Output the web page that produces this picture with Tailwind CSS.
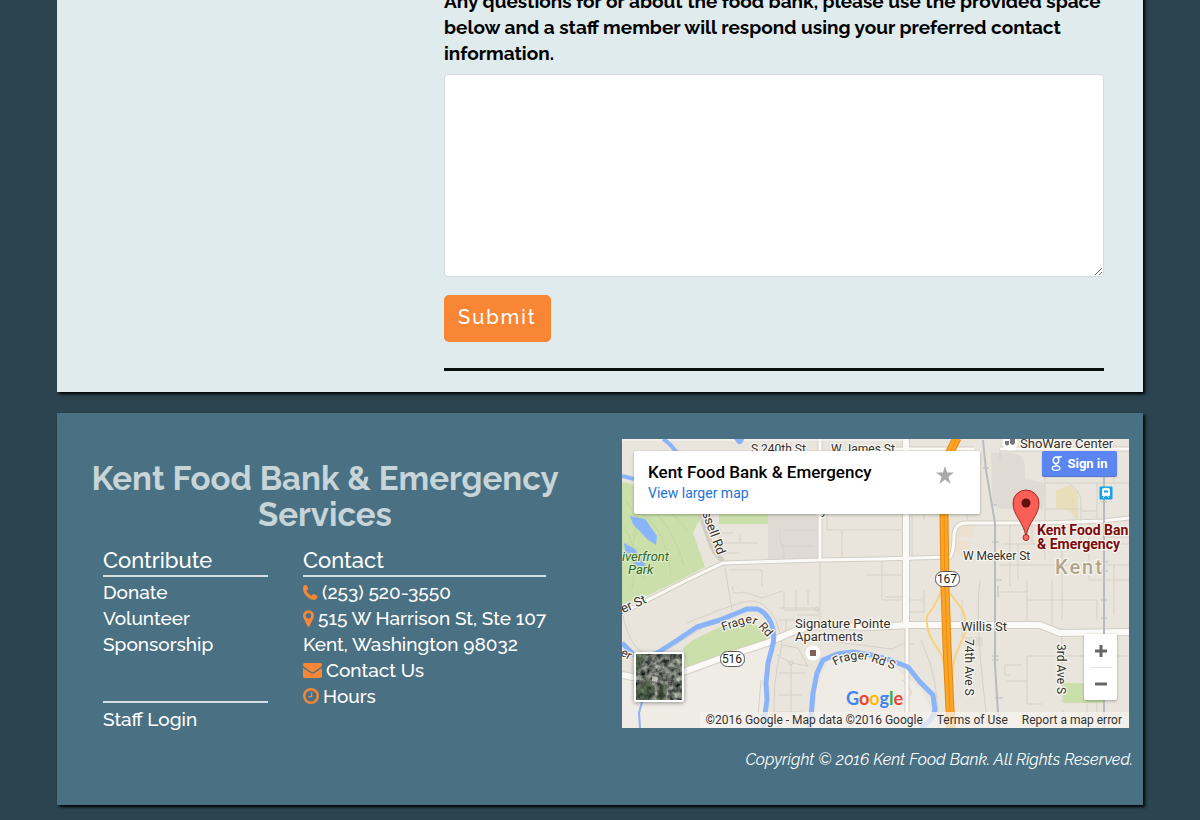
<!DOCTYPE html>
<html lang="en">
<head>
<meta charset="utf-8">
<meta name="viewport" content="width=device-width, initial-scale=1">
<title>Kent Food Bank &amp; Emergency Services</title>
<script src="https://cdn.jsdelivr.net/npm/@tailwindcss/browser@4"></script>
</head>
<body class="min-h-screen overflow-x-hidden bg-[#2c4450] px-[57px] font-[Raleway,Lato,sans-serif] text-black">

<main class="bg-[#dfebed] pr-[39px] pb-[21px] pl-[387px] shadow-[2px_2px_3px_#000]">
  <form>
    <label for="questions" class="-mt-3 block pb-2 text-[19px] leading-[26px] font-bold">Any questions for or about the food bank, please use the provided space below and a staff member will respond using your preferred contact information.</label>
    <textarea id="questions" class="block h-[203px] w-full resize rounded border border-[#d5dcde] bg-white p-3 text-[19px]"></textarea>
    <button type="submit" class="mt-[18px] block h-[47px] rounded-[5px] bg-[#f88635] px-[14px] pb-[3px] text-[20px] font-medium tracking-[2px] text-white">Submit</button>
  </form>
  <hr class="mt-[26px] border-t-[3px] border-[#0c1011]">
</main>

<footer class="mt-[21px] flex bg-[#4a7183] pt-[26px] text-[19px] leading-[26px] font-medium text-white shadow-[2px_2px_3px_#000]">
  <div class="w-1/2 pt-[22px] pr-[22px] pb-[73px] pl-[15px]">
    <h2 class="text-center text-[33px] leading-9 font-bold text-[#c7d4d8]">Kent Food Bank &amp; Emergency Services</h2>
    <div class="mt-[13px] flex gap-[35px] pl-[31px]">
      <nav class="w-[165px]">
        <h3 class="mb-[2px] border-b-2 border-[#d3dfe2] pb-[1px] text-[22px] leading-7">Contribute</h3>
        <a href="#donate" class="block">Donate</a>
        <a href="#volunteer" class="block">Volunteer</a>
        <a href="#sponsorship" class="block">Sponsorship</a>
        <a href="#staff" class="mt-[44px] block border-t-2 border-[#d3dfe2] pt-[3px]">Staff Login</a>
      </nav>
      <div class="w-[243px] whitespace-nowrap">
        <h3 class="mb-[2px] border-b-2 border-[#d3dfe2] pb-[1px] text-[22px] leading-7">Contact</h3>
        <a href="tel:+12535203550" class="flex items-center gap-1">
          <svg class="h-[15px] w-[15px] shrink-0" viewBox="0 0 15 15" fill="#f88635"><path d="M.7.9C1.600 0 2.800-.2 3.600.2l1.500 3.100c.2.500 0 1-.4 1.300l-.9.7c-.3.300-.3.600-.1 1 .8 1.600 2.300 3.200 4.100 4.200.4.200.8.200 1-.1l.9-1c.3-.4.800-.5 1.200-.3l3 1.600c.5.300.7.700.5 1.300-.5 1.900-2.100 3-4 2.800C5.600 14.200.4 8.800 0 3.900-.1 2.700.2 1.600.7.900z"/></svg>
          <span>(253) 520-3550</span></a>
        <address class="not-italic">
          <span class="flex items-center gap-1">
            <svg class="h-[17px] w-[11px] shrink-0" viewBox="0 0 11 17" fill="#f88635" fill-rule="evenodd"><path d="M5.500.2C8.600.2 11 2.600 11 5.700c0 1-.2 1.700-.5 2.300l-4 8.200c-.4.800-1.600.8-2 0L.5 8C.2 7.300 0 6.600 0 5.700 0 2.600 2.400.2 5.500.2zm0 2.800a2.700 2.700 0 1 0 0 5.400 2.700 2.700 0 0 0 0-5.400z"/></svg>
            <span>515 W Harrison St, Ste 107</span></span>
          Kent, Washington 98032
        </address>
        <a href="#contact" class="flex items-center gap-1">
          <svg class="h-[15px] w-[19px] shrink-0" viewBox="0 0 19 15" fill="#f88635"><path d="M1.700 0h15.600C18.300 0 19 .6 19 1.600c0 1.200-.8 2.300-1.900 3L11.400 8.600c-.7.500-1.300.8-1.900.8s-1.200-.3-1.900-.8L1.900 4.600C.8 3.800 0 2.800 0 1.700 0 .6.700 0 1.700 0zM0 4.700c.3.400.7.700 1.200 1l5.500 3.900c.9.700 1.900 1.100 2.800 1.100s1.900-.4 2.800-1.100l5.500-3.900c.5-.3.900-.6 1.200-1v8.600c0 1-.8 1.700-1.700 1.700H1.700c-1 0-1.700-.8-1.700-1.700z"/></svg>
          <span>Contact Us</span></a>
        <a href="#hours" class="flex items-center gap-1">
          <svg class="h-4 w-4 shrink-0" viewBox="0 0 16 16" fill="none" stroke="#f88635"><circle cx="8" cy="8" r="6.800" stroke-width="2.400"/><path d="M8.600 4.200v4.500H5.300" stroke-width="1.300"/></svg>
          <span>Hours</span></a>
      </div>
    </div>
  </div>

  <div class="w-1/2 pr-[14px] pl-[22px]">
    <div class="relative h-[289px] overflow-hidden bg-[#e9e5dc] font-[Roboto,sans-serif] font-normal">
      <svg class="h-full w-full" viewBox="0 -1 507 289" preserveAspectRatio="xMidYMid slice" role="img" aria-label="Map of Kent, Washington">
        <defs>
          <path id="fragerRoad" d="M101 191L122 184Q131 181 138 189L152 205"/>
          <path id="fragerRoadSouth" d="M213 226Q231 216 248 221L290 236"/>
        </defs>
        <rect y="-1" width="507" height="289" fill="#e9e5dc"/>
        <path d="M0 238L60 235 152 204 146 223 145 288H0zM192 288L195 245 205 222 230 216 268 224 300 250 309 272 300 288z" fill="#efece5"/>
        <g fill="#cadfaa">
          <path d="M0 42L14 45V74H80L71 93 83 127 58 140 20 158 0 167z"/>
          <path d="M97 74h50v10H97zM61 208L71 200 98 187 121 180 138 187 146 200 65 228zM441 243h41v20h-41z"/>
        </g>
        <path d="M3 60Q18 75 12 98T22 138M35 74Q52 92 62 125M20 74Q43 88 49 135M0 87Q17 100 10 150M50 74Q60 82 66 92" fill="none" stroke="#c3d3a6"/>
        <path d="M146 74h49v45h-49zM369 13H391Q403 15 403 28V39L423 43 421 69H381Q370 69 370 54z" fill="#dfdad4"/>
        <path d="M434 50L448 46 456 51V81L448 71 434 68z" fill="#e9ddba"/>
        <path d="M334 85h18v12h-18zM334 101h14v14h-14z" fill="#eee0cf"/>
        <path d="M343 197h18v9h-18z" fill="#dfdad4"/>
        <g fill="none" stroke="#d6d1c6">
          <path d="M98 87V118M98 93H112M98 103H136M118 95V103M98 113H118M103 128L110 170M107 130H140M140 130V146M111 146Q108 156 122 152L140 158 160 151M162 151V170H196M174 150V170M186 150V165M157 168H196M157 180H190M164 180V192M175 175H196V168M160 205L176 208 186 226 169 223 155 215M169 224V288M157 233H183M157 255H180M155 272H180M198 120V185M205 74V90H283M220 90V120M245 135H283M260 120V160H300M290 74V120M158 88V100L162 110V119M161 90H195M161 106H190M199 200L230 204 270 209 280 204H292M297 17H330M302 20V80M263 157H283V172H302V150M332 70V40H345M340 160V198M378 7V20M378 125H507M388 83V146M380 104H425M396 104V140M410 83V104M423 9V120M423 43H507M423 69H459M459 60V83M459 60Q457 49 447 44M459 71H475M475 43V83M480 97H507M459 83V104H507M440 104V180M467 83V140H507M378 152H405M405 140V188M405 160H475V180M430 140V185M440 192V262M440 216H507M405 216H440M405 216V264H420M405 241H385M400 225H383V235H388M475 195V288M475 216V243M492 0V9M492 30V43M492 125V175M441 270V288M465 264V275H507M299 200Q318 240 316 288M340 30Q338 60 346 80M358 140Q352 180 366 288M0 170Q4 195 14 207T50 207L80 188M280 240Q295 252 286 258M154 288Q148 250 160 205Q156 176 145 168Q135 157 118 163L95 171 65 183M135 288L139 240"/>
          <circle cx="195" cy="169" r="2"/><circle cx="169" cy="223" r="2"/>
        </g>
        <g fill="none" stroke="#d3cec3">
          <g stroke-width="8"><path d="M0 235L15 238 61 232 108 215 145 203 175 190 198 185 248 187 288 185H418L438 193 507 192"/><path d="M284-1V185"/></g>
          <g stroke-width="5"><path d="M285 185V288M198-1V120M0 173L65 140 101 123 198 120 258 119 328 117Q332 112 332 95 333 83 344 83H421L481 81 507 78M250 9H352M378 9H507M91 110L104 125M55 11L91 110"/></g>
        </g>
        <g fill="none" stroke="#fbfaf7">
          <g stroke-width="6"><path d="M0 235L15 238 61 232 108 215 145 203 175 190 198 185 248 187 288 185H418L438 193 507 192"/><path d="M284-1V185"/></g>
          <g stroke-width="3"><path d="M285 185V288M198-1V120M0 173L65 140 101 123 198 120 258 119 328 117Q332 112 332 95 333 83 344 83H421L481 81 507 78M250 9H352M378 9H507"/></g>
        </g>
        <path d="M0 0H284" stroke="#fbfaf7"/>
        <g fill="none" stroke="#8ab4fa" stroke-width="4" stroke-linejoin="round">
          <path d="M41-1Q48 3 55 13M0 36L12 39"/>
          <path d="M0 203L11 214Q24 218 35 213L51 203 75 187 98 180 125 169H135Q144 172 149 183 154 195 150 208L146 223 144 243 145 260 141 288" stroke-width="5"/>
          <path d="M188 288L191 253 195 233 201 220 215 214 231 212 250 215 268 220 286 227 298 242 311 255 313 270Q311 281 298 288" stroke-width="5"/>
          <path d="M21 258L17 273 18 288" stroke-width="2"/>
        </g>
        <path d="M8 76L23 79 35 96 34 105 25 99 11 84zM2 103L13 109 26 129 20 134 3 111zM112-1H122Q121 5 116 4z" fill="#8ab4fa"/>
        <g fill="none" stroke="#b9bbbd" stroke-width="1">
          <path d="M361 0L364 30 373 83V225L377 288M482 30V288" stroke-width="2"/>
          <path d="M361 28h6M369 65h6M370 102h7M372 140h8M376 146V157M370 216h7M370 220h7M373 258h8M479 62h6M478 122h8M479 131h7M479 160h6M479 178h6"/>
        </g>
        <g fill="none" stroke="#f8d27c" stroke-width="2">
          <path d="M320 148Q318 158 305 176Q304 188 309 198L319 214Q323 224 325 250M328 153L341 171Q345 180 343 193L334 214Q330 226 330 244"/>
        </g>
        <path d="M335-2L326 16 323 60 322 74 323 147 325 207 329 290" fill="none" stroke="#e58a12" stroke-width="9"/>
        <path d="M335-2L326 16 323 60 322 74 323 147 325 207 329 290" fill="none" stroke="#fba426" stroke-width="7"/>
        <path d="M335-2L326 16 323 60 322 74 323 147 325 207 329 290" fill="none" stroke="#ea9015" stroke-width="1"/>

        <g font-size="12" fill="#36322d" stroke="#f7f5f0" stroke-width="2.500" paint-order="stroke" stroke-linejoin="round">
          <text x="129" y="13">S 240th St</text>
          <text x="209" y="13">W James St</text>
          <text x="193" y="74">ey</text>
          <text x="398" y="8" font-size="13">ShoWare Center</text>
          <text transform="translate(80 73) rotate(70)" font-size="13">ssell Rd</text>
          <text transform="translate(-5 176) rotate(-24)" font-size="13">ker St</text>
          <text transform="translate(-2 215) rotate(28)">er</text>
          <text><textPath href="#fragerRoad">Frager Rd</textPath></text>
          <text><textPath href="#fragerRoadSouth">Frager Rd S</textPath></text>
          <text x="173" y="188" font-size="13">Signature Pointe</text>
          <text x="173" y="201" font-size="13">Apartments</text>
          <text x="341" y="120">W Meeker St</text>
          <text x="339" y="191" font-size="13">Willis St</text>
          <text transform="translate(343 199) rotate(90)">74th Ave S</text>
          <text transform="translate(435 204) rotate(90)">3rd Ave S</text>
          <g fill="#2d6a2d" stroke="#dcebc6" font-style="italic" font-size="13"><text x="0" y="121">iverfront</text><text x="6" y="134">Park</text></g>
          <text x="433" y="134" font-size="20" font-weight="500" class="tracking-[2px]" fill="#b0a58b">Kent</text>
          <g fill="#7c0b0b" font-size="14" font-weight="700"><text x="415" y="95">Kent Food Ban</text><text x="415" y="109">&amp; Emergency</text></g>
        </g>
        <g fill="#fff" stroke="#555" font-size="12">
          <rect x="313.500" y="131.500" width="24" height="15" rx="7"/><rect x="98.500" y="211.500" width="24" height="15" rx="7"/>
          <g fill="#222" stroke="none" text-anchor="middle"><text x="325" y="143">167</text><text x="110" y="223">516</text></g>
        </g>
        <circle cx="191" cy="213" r="7.500" fill="#fff"/><path d="M188 210h6v6h-6z" fill="#83645c"/>
        <circle cx="388" cy="3" r="7.500" fill="#fff"/><path d="M383 1h4v3q-2 3-4 0zM388-1h5v4q-2 4-5 0z" fill="#777"/>
        <rect x="477.500" y="46.500" width="13" height="13" rx="1" fill="#10a3ea"/>
        <path d="M480.500 49q3.500-1.500 7 0v6.500h-7zM481 58l1.500-2M487 58l-1.500-2" fill="#fff" stroke="#fff"/><path d="M482 50.500h4v2h-4z" fill="#10a3ea"/>
        <path d="M404 97C402 82 391 76 391 63A13 13 0 0 1 417 63C417 76 406 82 404 97z" fill="#f95f57" stroke="#a52824"/>
        <circle cx="404" cy="63" r="4.500" fill="#60110f"/><circle cx="404" cy="97.500" r="3" fill="#ff6a63" stroke="#a52824"/>
      </svg>

      <div class="absolute top-3 left-3 flex h-[63px] w-[346px] justify-between rounded-[2px] bg-white pt-[10px] pr-[26px] pl-[14px] shadow-[0_1px_3px_rgba(0,0,0,0.3)]">
        <div>
          <strong class="block text-[17px] leading-[22px] font-medium text-black">Kent Food Bank &amp; Emergency</strong>
          <a href="#map" class="block text-[14px] leading-5 text-[#2373d8]">View larger map</a>
        </div>
        <button type="button" aria-label="Save this place" class="h-7"><svg class="h-[18px] w-[18px]" viewBox="0 0 18 18" fill="#a9a9a9"><path d="M9 0l2.100 6.600H18l-5.600 4.200L14.600 18 9 13.600 3.400 18l2.200-7.200L0 6.600h6.900z"/></svg></button>
      </div>

      <button type="button" class="absolute top-3 right-3 flex h-[25px] w-[75px] items-center justify-center gap-1 rounded-[2px] bg-[#5b86f2] text-[13px] font-bold text-white shadow-[0_1px_1px_#4a6cc4]">
        <svg class="h-[15px] w-3" viewBox="0 0 12 15" fill="none" stroke="#fff"><ellipse cx="5" cy="4.300" rx="2.800" ry="3.300" stroke-width="1.400"/><path d="M6 .8h5M8.500 1v1M5 7.600c-.8 1.200.3 1.500 1.800 2.300 1.400.7 2.200 1.200 2.200 2.300 0 1.300-1.500 2.100-4 2.100S1.300 13.500 1.300 12.200c0-1.700 2.200-2.300 4.700-2.300" stroke-width="1.300"/></svg>
        Sign in</button>

      <button type="button" aria-label="Satellite view" class="absolute bottom-[26px] left-3 h-[50px] w-[50px] rounded-[2px] border-2 border-white shadow-[0_1px_4px_rgba(0,0,0,0.4)]">
        <svg class="h-full w-full" viewBox="0 0 46 46"><defs><filter id="ground" x="0" y="0" width="100%" height="100%" color-interpolation-filters="sRGB"><feTurbulence type="fractalNoise" baseFrequency="0.180" numOctaves="4" seed="8"/><feColorMatrix values="1 0 0 0 -.080 1 0 0 0 -.060 .9 0 0 0 -.040 0 0 0 0 1"/></filter></defs><rect width="46" height="46" filter="url(#ground)"/><path d="M0 0H12L4 14 0 22zM0 32l14-6 5 8-5 12H0zM26 30l6 2-2 14H20z" fill="#2f4a2a" opacity=".5"/><path d="M34 0L30 46M0 24L46 12" stroke="#9a9797" opacity=".5"/><path d="M16 22l6 1-1 5-5-1z" fill="#d8d4d0" opacity=".8"/></svg>
      </button>

      <div class="absolute right-3 bottom-[28px] flex h-[66px] w-[33px] flex-col items-center rounded-[2px] bg-white shadow-[0_1px_3px_rgba(0,0,0,0.3)]">
        <button type="button" aria-label="Zoom in" class="flex h-[33px] w-full items-center justify-center"><svg class="h-3 w-3" viewBox="0 0 12 12" stroke="#666" stroke-width="3"><path d="M6 0v12M0 6h12"/></svg></button>
        <span class="h-px w-[22px] bg-[#e2e2e2]"></span>
        <button type="button" aria-label="Zoom out" class="flex h-8 w-full items-center justify-center"><svg class="h-3 w-3" viewBox="0 0 12 12" stroke="#666" stroke-width="3"><path d="M0 6h12"/></svg></button>
      </div>

      <div aria-label="Google" class="absolute bottom-[18px] left-[224px] font-[Lato,sans-serif] text-[18px] leading-6 font-bold"><span class="text-[#4285f4]">G</span><span class="text-[#ea4335]">o</span><span class="text-[#fbbc05]">o</span><span class="text-[#4285f4]">g</span><span class="text-[#34a853]">l</span><span class="text-[#ea4335]">e</span></div>

      <div class="absolute right-0 bottom-0 flex h-4 items-center gap-[14px] bg-[#f5f3ef]/75 pr-[7px] pl-[6px] text-[12px] leading-4 whitespace-nowrap text-[#333]">
        <span>©2016 Google - Map data ©2016 Google</span>
        <a href="#terms">Terms of Use</a>
        <a href="#report">Report a map error</a>
      </div>
    </div>
    <p class="-mr-1 mt-5 text-right text-[16px] leading-6 font-normal italic">Copyright © 2016 Kent Food Bank. All Rights Reserved.</p>
  </div>
</footer>
</body>
</html>
